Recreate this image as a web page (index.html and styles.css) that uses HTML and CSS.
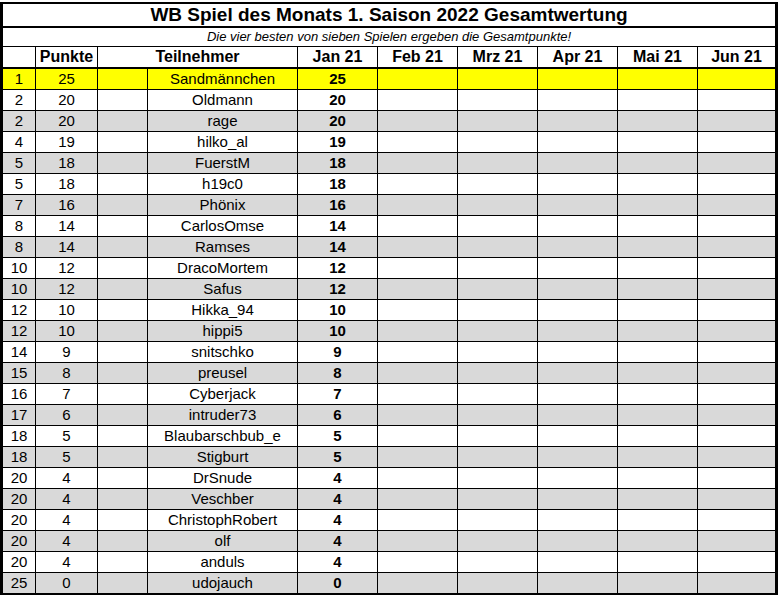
FILE: index.html
```html
<!DOCTYPE html>
<html lang="de">
<head>
<meta charset="utf-8">
<title>WB Spiel des Monats</title>
<link rel="stylesheet" href="styles.css">
</head>
<body>
<div class="sheet">
  <div class="title">WB Spiel des Monats 1. Saison 2022 Gesamtwertung</div>
  <div class="subtitle">Die vier besten von sieben Spielen ergeben die Gesamtpunkte!</div>
  <div class="row head">
    <div class="c"></div><div class="c">Punkte</div><div class="c span2">Teilnehmer</div><div class="c">Jan 21</div><div class="c">Feb 21</div><div class="c">Mrz 21</div><div class="c">Apr 21</div><div class="c">Mai 21</div><div class="c">Jun 21</div>
  </div>
  <div class="row yellow"><div class="c">1</div><div class="c">25</div><div class="c"></div><div class="c">Sandmännchen</div><div class="c b">25</div><div class="c"></div><div class="c"></div><div class="c"></div><div class="c"></div><div class="c"></div></div>
  <div class="row"><div class="c">2</div><div class="c">20</div><div class="c"></div><div class="c">Oldmann</div><div class="c b">20</div><div class="c"></div><div class="c"></div><div class="c"></div><div class="c"></div><div class="c"></div></div>
  <div class="row gray"><div class="c">2</div><div class="c">20</div><div class="c"></div><div class="c">rage</div><div class="c b">20</div><div class="c"></div><div class="c"></div><div class="c"></div><div class="c"></div><div class="c"></div></div>
  <div class="row"><div class="c">4</div><div class="c">19</div><div class="c"></div><div class="c">hilko_al</div><div class="c b">19</div><div class="c"></div><div class="c"></div><div class="c"></div><div class="c"></div><div class="c"></div></div>
  <div class="row gray"><div class="c">5</div><div class="c">18</div><div class="c"></div><div class="c">FuerstM</div><div class="c b">18</div><div class="c"></div><div class="c"></div><div class="c"></div><div class="c"></div><div class="c"></div></div>
  <div class="row"><div class="c">5</div><div class="c">18</div><div class="c"></div><div class="c">h19c0</div><div class="c b">18</div><div class="c"></div><div class="c"></div><div class="c"></div><div class="c"></div><div class="c"></div></div>
  <div class="row gray"><div class="c">7</div><div class="c">16</div><div class="c"></div><div class="c">Phönix</div><div class="c b">16</div><div class="c"></div><div class="c"></div><div class="c"></div><div class="c"></div><div class="c"></div></div>
  <div class="row"><div class="c">8</div><div class="c">14</div><div class="c"></div><div class="c">CarlosOmse</div><div class="c b">14</div><div class="c"></div><div class="c"></div><div class="c"></div><div class="c"></div><div class="c"></div></div>
  <div class="row gray"><div class="c">8</div><div class="c">14</div><div class="c"></div><div class="c">Ramses</div><div class="c b">14</div><div class="c"></div><div class="c"></div><div class="c"></div><div class="c"></div><div class="c"></div></div>
  <div class="row"><div class="c">10</div><div class="c">12</div><div class="c"></div><div class="c">DracoMortem</div><div class="c b">12</div><div class="c"></div><div class="c"></div><div class="c"></div><div class="c"></div><div class="c"></div></div>
  <div class="row gray"><div class="c">10</div><div class="c">12</div><div class="c"></div><div class="c">Safus</div><div class="c b">12</div><div class="c"></div><div class="c"></div><div class="c"></div><div class="c"></div><div class="c"></div></div>
  <div class="row"><div class="c">12</div><div class="c">10</div><div class="c"></div><div class="c">Hikka_94</div><div class="c b">10</div><div class="c"></div><div class="c"></div><div class="c"></div><div class="c"></div><div class="c"></div></div>
  <div class="row gray"><div class="c">12</div><div class="c">10</div><div class="c"></div><div class="c">hippi5</div><div class="c b">10</div><div class="c"></div><div class="c"></div><div class="c"></div><div class="c"></div><div class="c"></div></div>
  <div class="row"><div class="c">14</div><div class="c">9</div><div class="c"></div><div class="c">snitschko</div><div class="c b">9</div><div class="c"></div><div class="c"></div><div class="c"></div><div class="c"></div><div class="c"></div></div>
  <div class="row gray"><div class="c">15</div><div class="c">8</div><div class="c"></div><div class="c">preusel</div><div class="c b">8</div><div class="c"></div><div class="c"></div><div class="c"></div><div class="c"></div><div class="c"></div></div>
  <div class="row"><div class="c">16</div><div class="c">7</div><div class="c"></div><div class="c">Cyberjack</div><div class="c b">7</div><div class="c"></div><div class="c"></div><div class="c"></div><div class="c"></div><div class="c"></div></div>
  <div class="row gray"><div class="c">17</div><div class="c">6</div><div class="c"></div><div class="c">intruder73</div><div class="c b">6</div><div class="c"></div><div class="c"></div><div class="c"></div><div class="c"></div><div class="c"></div></div>
  <div class="row"><div class="c">18</div><div class="c">5</div><div class="c"></div><div class="c">Blaubarschbub_e</div><div class="c b">5</div><div class="c"></div><div class="c"></div><div class="c"></div><div class="c"></div><div class="c"></div></div>
  <div class="row gray"><div class="c">18</div><div class="c">5</div><div class="c"></div><div class="c">Stigburt</div><div class="c b">5</div><div class="c"></div><div class="c"></div><div class="c"></div><div class="c"></div><div class="c"></div></div>
  <div class="row"><div class="c">20</div><div class="c">4</div><div class="c"></div><div class="c">DrSnude</div><div class="c b">4</div><div class="c"></div><div class="c"></div><div class="c"></div><div class="c"></div><div class="c"></div></div>
  <div class="row gray"><div class="c">20</div><div class="c">4</div><div class="c"></div><div class="c">Veschber</div><div class="c b">4</div><div class="c"></div><div class="c"></div><div class="c"></div><div class="c"></div><div class="c"></div></div>
  <div class="row"><div class="c">20</div><div class="c">4</div><div class="c"></div><div class="c">ChristophRobert</div><div class="c b">4</div><div class="c"></div><div class="c"></div><div class="c"></div><div class="c"></div><div class="c"></div></div>
  <div class="row gray"><div class="c">20</div><div class="c">4</div><div class="c"></div><div class="c">olf</div><div class="c b">4</div><div class="c"></div><div class="c"></div><div class="c"></div><div class="c"></div><div class="c"></div></div>
  <div class="row"><div class="c">20</div><div class="c">4</div><div class="c"></div><div class="c">anduls</div><div class="c b">4</div><div class="c"></div><div class="c"></div><div class="c"></div><div class="c"></div><div class="c"></div></div>
  <div class="row gray last"><div class="c">25</div><div class="c">0</div><div class="c"></div><div class="c">udojauch</div><div class="c b">0</div><div class="c"></div><div class="c"></div><div class="c"></div><div class="c"></div><div class="c"></div></div>
</div>
</body>
</html>
```

FILE: styles.css
```css
html, body {
  margin: 0;
  padding: 0;
  background: #fff;
}

body {
  font-family: "Liberation Sans", Arial, sans-serif;
  color: #000;
  padding-top: 2px;
}

.sheet {
  width: 772px;
  border-top: 2px solid #000;
  border-bottom: 2px solid #000;
  border-left: 3px solid #000;
  border-right: 3px solid #000;
  background: #fff;
}

.title {
  height: 22px;
  line-height: 22px;
  font-size: 19px;
  font-weight: bold;
  text-align: center;
  border-bottom: 2px solid #000;
}

.subtitle {
  height: 18px;
  line-height: 18px;
  font-size: 13px;
  font-style: italic;
  text-align: center;
  border-bottom: 1px solid #000;
}

.row {
  display: grid;
  grid-template-columns: 33px 62px 50px 150px repeat(5, 80px) 77px;
  height: 20px;
  border-bottom: 1px solid #000;
}

.row.head {
  border-bottom: 2px solid #000;
  font-weight: bold;
  font-size: 16px;
}

.row.last {
  border-bottom: none;
}

.row.yellow {
  background: #ffff00;
}

.row.gray {
  background: #d9d9d9;
}

.c {
  border-right: 1px solid #000;
  text-align: center;
  line-height: 20px;
  font-size: 15px;
  white-space: nowrap;
  overflow: hidden;
}

.head .c {
  font-size: 16px;
}

.c:last-child {
  border-right: none;
}

.span2 {
  grid-column: span 2;
}

.b {
  font-weight: bold;
}
```
